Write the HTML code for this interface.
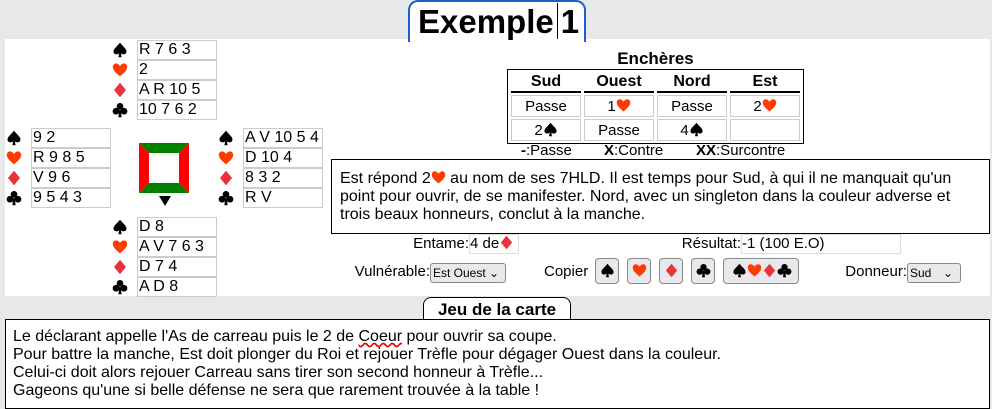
<!DOCTYPE html>
<html><head><meta charset="utf-8"><style>
*{box-sizing:border-box;margin:0;padding:0}
body{width:992px;height:405px;overflow:hidden;background:#e7e8ea;font-family:"Liberation Sans",sans-serif;position:relative;color:#000}
.a{position:absolute}
#panel{left:5px;top:39px;width:985px;height:257px;background:#fff}
#title{left:408px;top:0;width:178px;height:42px;background:#fff;border:2px solid #1a5fd0;border-bottom:none;border-radius:10px 10px 0 0;font-weight:bold;font-size:33px;padding-left:8px;line-height:40px}
.row{position:absolute;height:20px;width:80px;border:1px solid #ccc;line-height:18px;padding-left:1px;font-size:16px}
.s{position:absolute;width:16px;height:16px}
svg.i{width:15px;height:15px;vertical-align:-2px}
table{border-collapse:separate;border-spacing:3px 2px;border:1.5px solid #000;position:absolute;left:507px;top:69px;width:297px;table-layout:fixed}
td,th{text-align:center;font-size:15px}
th{border-bottom:2px solid #000;font-size:16px;height:21px}
td{border:1px solid #ccc;height:22px}
.btn{position:absolute;top:258px;height:26px;border:1px solid #888;border-radius:4px;background:#e9e9ed;text-align:center;padding-top:4px}
.sel{position:absolute;top:263px;height:20px;border:1px solid #888;border-radius:3px;background:#e9e9ed;font-size:12px;line-height:18px;padding-left:2px}
.lbl{position:absolute;font-size:15px;text-align:right}
</style></head><body>
<svg width="0" height="0" style="position:absolute">
<defs>
<symbol id="S" viewBox="0 0 20 20"><path d="M10 1C6 6 1 9 2 13C3 16 7 16 9 14L8 19H12L11 14C13 16 17 16 18 13C19 9 14 6 10 1Z" fill="#000"/></symbol>
<symbol id="H" viewBox="0 0 20 20"><path d="M10 18C4 13 1 10 1 6C1 3 4 1 6.5 2C8 2.5 9.5 4 10 5C10.5 4 12 2.5 13.5 2C16 1 19 3 19 6C19 10 16 13 10 18Z" fill="#ff3c00"/></symbol>
<symbol id="D" viewBox="0 0 20 20"><path d="M10 1L17.5 10L10 19L2.5 10Z" fill="#e8323c"/></symbol>
<symbol id="C" viewBox="0 0 20 20"><g fill="#000"><circle cx="10" cy="5.5" r="4.2"/><circle cx="5" cy="11.5" r="4.2"/><circle cx="15" cy="11.5" r="4.2"/><path d="M9 10L8 19H12L11 10Z"/></g></symbol>
</defs></svg>
<div class="a" id="panel"></div>
<div class="a" id="title">Exemple<span style="display:inline-block;width:1px;height:36px;background:#000;vertical-align:-6px;margin:0 3px"></span>1</div>

<svg class="s" style="left:112px;top:42px"><use href="#S"/></svg><div class="row" style="left:137px;top:40px">R 7 6 3</div>
<svg class="s" style="left:112px;top:62px"><use href="#H"/></svg><div class="row" style="left:137px;top:60px">2</div>
<svg class="s" style="left:112px;top:82px"><use href="#D"/></svg><div class="row" style="left:137px;top:80px">A R 10 5</div>
<svg class="s" style="left:112px;top:102px"><use href="#C"/></svg><div class="row" style="left:137px;top:100px">10 7 6 2</div>

<svg class="s" style="left:6px;top:130px"><use href="#S"/></svg><div class="row" style="left:31px;top:128px">9 2</div>
<svg class="s" style="left:6px;top:150px"><use href="#H"/></svg><div class="row" style="left:31px;top:148px">R 9 8 5</div>
<svg class="s" style="left:6px;top:170px"><use href="#D"/></svg><div class="row" style="left:31px;top:168px">V 9 6</div>
<svg class="s" style="left:6px;top:190px"><use href="#C"/></svg><div class="row" style="left:31px;top:188px">9 5 4 3</div>

<svg class="s" style="left:218px;top:130px"><use href="#S"/></svg><div class="row" style="left:243px;top:128px">A V 10 5 4</div>
<svg class="s" style="left:218px;top:150px"><use href="#H"/></svg><div class="row" style="left:243px;top:148px">D 10 4</div>
<svg class="s" style="left:218px;top:170px"><use href="#D"/></svg><div class="row" style="left:243px;top:168px">8 3 2</div>
<svg class="s" style="left:218px;top:190px"><use href="#C"/></svg><div class="row" style="left:243px;top:188px">R V</div>

<svg class="s" style="left:112px;top:219px"><use href="#S"/></svg><div class="row" style="left:137px;top:217px">D 8</div>
<svg class="s" style="left:112px;top:239px"><use href="#H"/></svg><div class="row" style="left:137px;top:237px">A V 7 6 3</div>
<svg class="s" style="left:112px;top:259px"><use href="#D"/></svg><div class="row" style="left:137px;top:257px">D 7 4</div>
<svg class="s" style="left:112px;top:279px"><use href="#C"/></svg><div class="row" style="left:137px;top:277px">A D 8</div>

<svg class="a" style="left:139px;top:143px" width="51" height="65">
<polygon points="0,0 50,0 40,10 10,10" fill="#008000"/>
<polygon points="0,50 50,50 40,40 10,40" fill="#008000"/>
<polygon points="0,0 10,10 10,40 0,50" fill="#f00"/>
<polygon points="50,0 40,10 40,40 50,50" fill="#f00"/>
<polygon points="20,53 32,53 26,63" fill="#000"/>
</svg>

<div class="a" style="left:507px;top:49px;width:297px;text-align:center;font-weight:bold;font-size:17px">Enchères</div>
<table>
<tr><th>Sud</th><th>Ouest</th><th>Nord</th><th>Est</th></tr>
<tr><td>Passe</td><td>1<svg class="i"><use href="#H"/></svg></td><td>Passe</td><td>2<svg class="i"><use href="#H"/></svg></td></tr>
<tr><td>2<svg class="i"><use href="#S"/></svg></td><td>Passe</td><td>4<svg class="i"><use href="#S"/></svg></td><td></td></tr>
</table>
<div class="a" style="left:521px;top:142px;font-size:15px"><b>-</b>:Passe</div>
<div class="a" style="left:604px;top:142px;font-size:15px"><b>X</b>:Contre</div>
<div class="a" style="left:696px;top:142px;font-size:15px"><b>XX</b>:Surcontre</div>

<div class="a" style="left:331px;top:159px;width:659px;height:75px;border:1.5px solid #000;font-size:16px;line-height:18px;padding:10px 6px 0 8px;background:#fff">Est répond 2<svg class="i"><use href="#H"/></svg> au nom de ses 7HLD. Il est temps pour Sud, à qui il ne manquait qu'un point pour ouvrir, de se manifester. Nord, avec un singleton dans la couleur adverse et trois beaux honneurs, conclut à la manche.</div>

<div class="lbl" style="left:380px;width:89px;top:235px">Entame:</div>
<div class="a" style="left:469px;top:234px;width:50px;height:20px;border:1px solid #ddd;font-size:15px;line-height:18px">4 de<svg class="i"><use href="#D"/></svg></div>
<div class="lbl" style="left:640px;width:101px;top:235px">Résultat:</div>
<div class="a" style="left:741px;top:234px;width:160px;height:20px;border:1px solid #ddd;font-size:15px;line-height:18px">-1 (100 E.O)</div>

<div class="lbl" style="left:330px;width:100px;top:263px">Vulnérable:</div>
<div class="sel" style="left:430px;width:76px">Est Ouest ⌄</div>
<div class="a" style="left:544px;top:263px;font-size:15px">Copier</div>
<div class="btn" style="left:595px;width:24px"><svg class="i"><use href="#S"/></svg></div>
<div class="btn" style="left:627px;width:24px"><svg class="i"><use href="#H"/></svg></div>
<div class="btn" style="left:659px;width:24px"><svg class="i"><use href="#D"/></svg></div>
<div class="btn" style="left:691px;width:24px"><svg class="i"><use href="#C"/></svg></div>
<div class="btn" style="left:723px;width:76px;padding-left:2px"><svg class="i"><use href="#S"/></svg><svg class="i"><use href="#H"/></svg><svg class="i"><use href="#D"/></svg><svg class="i"><use href="#C"/></svg></div>
<div class="lbl" style="left:820px;width:87px;top:263px">Donneur:</div>
<div class="sel" style="left:907px;width:54px">Sud<span style="float:right;margin-right:7px">⌄</span></div>

<div class="a" style="left:423px;top:297px;width:148px;height:24px;background:#fff;border:1px solid #000;border-bottom:none;border-radius:8px 8px 0 0;font-weight:bold;font-size:17px;text-align:center;line-height:24px">Jeu de la carte</div>
<div class="a" style="left:5px;top:319px;width:985px;height:90px;background:#fff;border:1px solid #000;font-size:16px;line-height:18px;padding:8px 0 0 7px">Le déclarant appelle l'As de carreau puis le 2 de <span style="text-decoration:underline wavy #d00">Coeur</span> pour ouvrir sa coupe.<br>Pour battre la manche, Est doit plonger du Roi et rejouer Trèfle pour dégager Ouest dans la couleur.<br>Celui-ci doit alors rejouer Carreau sans tirer son second honneur à Trèfle...<br>Gageons qu'une si belle défense ne sera que rarement trouvée à la table !</div>
</body></html>
